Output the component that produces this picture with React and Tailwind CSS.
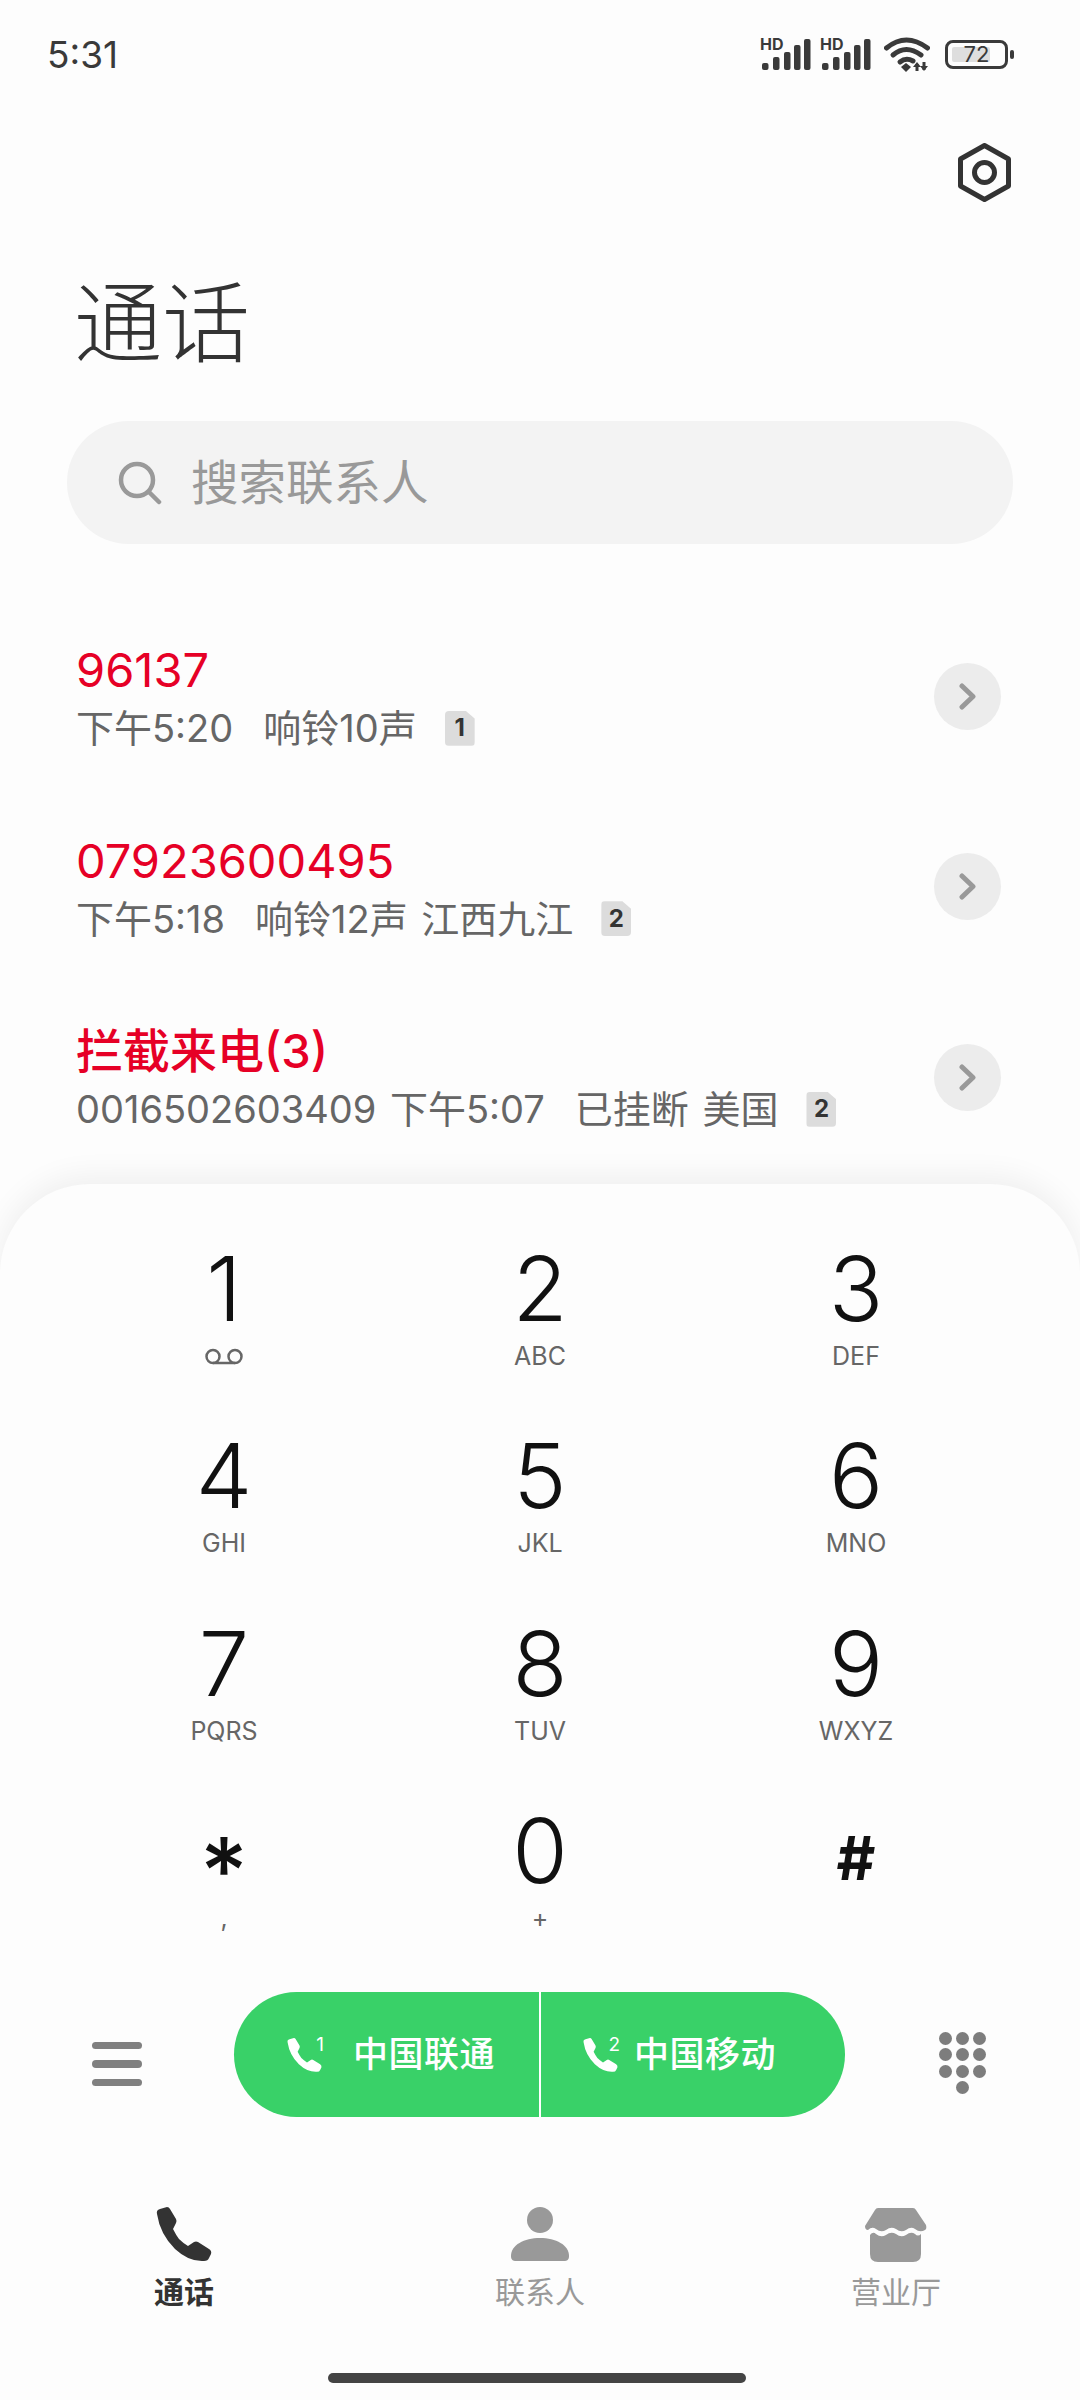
import React from 'react';

const calls = [
  { title: '96137', titleCls: 'font-normal', sub: '下午5:20', extra: '响铃10声', badge: '1' },
  { title: '07923600495', titleCls: 'font-normal', sub: '下午5:18', extra: '响铃12声 江西九江', badge: '2' },
  { title: '拦截来电(3)', titleCls: 'font-medium', sub: '0016502603409 下午5:07', extra: '已挂断 美国', badge: '2' },
];

const keys = [
  { digit: '1', sub: null, cls: 'text-[90px] leading-[92px] font-light' },
  { digit: '2', sub: 'ABC', cls: 'text-[90px] leading-[92px] font-light' },
  { digit: '3', sub: 'DEF', cls: 'text-[90px] leading-[92px] font-light' },
  { digit: '4', sub: 'GHI', cls: 'text-[90px] leading-[92px] font-light' },
  { digit: '5', sub: 'JKL', cls: 'text-[90px] leading-[92px] font-light' },
  { digit: '6', sub: 'MNO', cls: 'text-[90px] leading-[92px] font-light' },
  { digit: '7', sub: 'PQRS', cls: 'text-[90px] leading-[92px] font-light' },
  { digit: '8', sub: 'TUV', cls: 'text-[90px] leading-[92px] font-light' },
  { digit: '9', sub: 'WXYZ', cls: 'text-[90px] leading-[92px] font-light' },
  { digit: '*', sub: ',', cls: 'text-[92px] leading-[52px] pt-[40px] font-medium' },
  { digit: '0', sub: '+', cls: 'text-[90px] leading-[92px] font-light' },
  { digit: '#', sub: '', cls: 'text-[60px] leading-[78px] pt-[14px] font-bold' },
];

const PHONE = 'M1 7Q0 3 4 2L11 0Q13 0 14 2L20 12Q21 14 20 16L17 22Q20 28 23 32Q27 36 32 39L38 35Q40 34 42 35L53 42Q56 44 55 47L53 51Q52 54 48 54Q33 55 19 42Q4 27 1 7Z';

function Signal() {
  return (
    <div className="relative w-[51px] h-[33px]">
      <span className="absolute left-0 top-[-3px] text-[16px] leading-[18px] font-bold text-[#3a3a3a]">HD</span>
      <svg width="51" height="33" viewBox="0 0 51 33" fill="#3a3a3a">
        <rect x="2" y="25" width="6.5" height="7" rx="2" />
        <rect x="13" y="19" width="6.5" height="13" rx="2" />
        <rect x="24" y="14" width="6.5" height="18" rx="2" />
        <rect x="34" y="7" width="6.5" height="25" rx="2" />
        <rect x="44" y="1" width="6.5" height="31" rx="2" />
      </svg>
    </div>
  );
}

function Wifi() {
  return (
    <svg width="46" height="35" viewBox="0 0 46 35" fill="none" stroke="#3a3a3a" strokeWidth="5" strokeLinecap="round">
      <path d="M2.5 11Q22 -5 43.5 11" />
      <path d="M9 18Q22 7 37 18" />
      <path d="M16 25Q22 20 29 24" />
      <path d="M17 30L22 26L27 30L22 35Z" fill="#3a3a3a" stroke="none" />
      <path d="M33 27V34M40 25V33" strokeWidth="3" strokeLinecap="butt" />
      <path d="M29 30L33 25L37 30ZM36 29L40 34L44 29Z" fill="#3a3a3a" stroke="none" />
    </svg>
  );
}

function Battery() {
  return (
    <div className="flex items-center gap-[2px]">
      <div className="relative w-[63px] h-[29px] rounded-[8px] border-[3px] border-[#3a3a3a] p-[4px]">
        <div className="w-[38px] h-full rounded-[2px] bg-[#dedede]" />
        <span className="absolute inset-0 flex items-center justify-center text-[22px] leading-none text-[#3a3a3a]">72</span>
      </div>
      <div className="w-[4px] h-[9px] rounded-[2px] bg-[#3a3a3a]" />
    </div>
  );
}

function Voicemail() {
  return (
    <svg width="40" height="17" viewBox="0 0 40 17" fill="none" stroke="#666" strokeWidth="2.5">
      <circle cx="9" cy="8.5" r="6.5" />
      <circle cx="31" cy="8.5" r="6.5" />
      <path d="M9 15H31" />
    </svg>
  );
}

function CallRow({ call }) {
  return (
    <div className="flex items-center justify-between h-[190.5px] pl-[76px] pr-[79px]">
      <div className="pt-[6px]">
        <div className={`text-[47px] leading-[58px] text-[#e60026] ${call.titleCls}`}>{call.title}</div>
        <div className="flex items-center text-[38px] leading-[58px] text-[#666666] [word-spacing:3px]">
          <span>{call.sub}</span>
          <span className="ml-[30px]">{call.extra}</span>
          <span
            className="ml-[28px] flex items-center justify-center w-[30px] h-[35px] rounded-[4px] bg-[#dcdcdc] text-[24px] leading-none font-bold text-[#333333] [clip-path:polygon(0_0,70%_0,100%_22%,100%_100%,0_100%)]"
          >
            {call.badge}
          </span>
        </div>
      </div>
      <div className="flex items-center justify-center w-[67px] h-[67px] rounded-full bg-[#ececec]">
        <svg width="17" height="27" viewBox="0 0 17 27" fill="none" stroke="#999999" strokeWidth="5" strokeLinecap="round" strokeLinejoin="round">
          <path d="M3 3L14 13.5L3 24" />
        </svg>
      </div>
    </div>
  );
}

function SimButton({ sim, label, className }) {
  return (
    <div className={`flex items-center h-full text-white ${className}`}>
      <div className="relative w-[35px] h-[35px]">
        <svg width="35" height="35" viewBox="0 0 56 56" fill="#ffffff" className="absolute left-0 top-[1px]">
          <path d={PHONE} />
        </svg>
        <span className="absolute right-[-2px] top-[-3px] text-[19px] leading-[22px]">{sim}</span>
      </div>
      <span className="text-[35px] leading-none tracking-[0.5px] font-medium">{label}</span>
    </div>
  );
}

export default function App() {
  return (
    <div className="relative flex flex-col w-[1080px] h-[2400px] overflow-hidden bg-[#fdfdfd] font-['Inter','Noto_Sans_CJK_SC',sans-serif]">
      <div className="flex items-center justify-between h-[108px] pl-[47px] pr-[66px]">
        <span className="text-[37px] leading-none text-[#3a3a3a]">5:31</span>
        <div className="flex items-center">
          <Signal />
          <div className="ml-[9px]"><Signal /></div>
          <div className="ml-[13px]"><Wifi /></div>
          <div className="ml-[15px]"><Battery /></div>
        </div>
      </div>

      <div className="flex justify-end pr-[69px] mt-[35px]">
        <svg width="53" height="59" viewBox="0 0 53 59" fill="none" stroke="#333333" strokeWidth="5" strokeLinejoin="round">
          <path d="M26.5 2.5L50.5 16V43L26.5 56.5L2.5 43V16Z" />
          <circle cx="26.5" cy="29.5" r="10" />
        </svg>
      </div>

      <h1 className="mt-[77px] pl-[74px] text-[88px] leading-[88px] font-light text-[#333333]">通话</h1>

      <div className="flex items-center mt-[54px] mx-[67px] h-[123px] rounded-full bg-[#f3f3f3] pl-[51px]">
        <svg width="44" height="44" viewBox="0 0 44 44" fill="none" stroke="#999999" strokeWidth="4.5" strokeLinecap="round">
          <circle cx="19" cy="19" r="16" />
          <path d="M31 31L41 41" />
        </svg>
        <span className="ml-[29px] text-[47.5px] leading-none text-[#999999]">搜索联系人</span>
      </div>

      <div className="mt-[57px]">
        {calls.map((call, i) => (
          <CallRow key={i} call={call} />
        ))}
      </div>

      <div className="flex-1 flex flex-col mt-[11px] pt-[59px] rounded-t-[90px] bg-[#fdfdfd] shadow-[0_-8px_30px_rgba(0,0,0,0.06)]">
        <div className="grid grid-cols-3 auto-rows-[187.5px] px-[66px]">
          {keys.map(({ digit, sub, cls }) => (
            <div key={digit} className="flex flex-col items-center">
              <span className={`h-[92px] text-[#111111] ${cls}`}>{digit}</span>
              <div className="flex items-center justify-center h-[40px] pt-[3px] text-[25px] leading-none text-[#666666]">
                {sub === null ? <Voicemail /> : sub}
              </div>
            </div>
          ))}
        </div>

        <div className="relative flex items-start -mt-[1px] h-[125px] pl-[92px]">
          <div className="flex flex-col gap-[11px] mt-[50px] w-[50px]">
            <div className="h-[7.5px] rounded-full bg-[#808080]" />
            <div className="h-[7.5px] rounded-full bg-[#808080]" />
            <div className="h-[7.5px] rounded-full bg-[#808080]" />
          </div>
          <div className="flex ml-[92px] w-[611px] h-[125px] rounded-full bg-[#39d168] overflow-hidden">
            <SimButton sim="1" label="中国联通" className="w-[307px] pl-[53px] gap-[31px] border-r-2 border-white" />
            <SimButton sim="2" label="中国移动" className="flex-1 pl-[42px] gap-[16px]" />
          </div>
          <div className="grid grid-cols-3 gap-x-[4px] gap-y-[3.5px] mt-[40px] ml-[94px] w-[47px]">
            {[0, 1, 2, 3, 4, 5, 6, 7, 8].map((n) => (
              <div key={n} className="w-[13px] h-[13px] rounded-full bg-[#7d7d7d]" />
            ))}
            <div className="col-start-2 w-[13px] h-[13px] rounded-full bg-[#7d7d7d]" />
          </div>
        </div>

        <div className="grid grid-cols-3 px-[6px] pt-[88px]">
          <div className="flex flex-col items-center">
            <div className="flex items-center justify-center h-[60px]">
              <svg width="56" height="56" viewBox="0 0 56 56" fill="#333333"><path d={PHONE} /></svg>
            </div>
            <span className="mt-[9px] text-[30px] leading-[36px] font-bold text-[#333333]">通话</span>
          </div>
          <div className="flex flex-col items-center">
            <div className="flex items-center justify-center h-[60px]">
              <svg width="58" height="58" viewBox="0 0 58 58" fill="#999999">
                <circle cx="29" cy="14" r="13" />
                <path d="M0 50C0 39 13 32 29 32S58 39 58 50C58 54 56 55 53 55H5C2 55 0 54 0 50Z" />
              </svg>
            </div>
            <span className="mt-[9px] text-[30px] leading-[36px] text-[#999999]">联系人</span>
          </div>
          <div className="flex flex-col items-center">
            <div className="flex items-center justify-center h-[60px]">
              <svg width="62" height="54" viewBox="0 0 62 54" fill="#999999">
                <path d="M13 0H48Q50 0 51 2L61 17Q62 21 60 22Q55 25 50 21Q46 18 41 22Q36 25 31 21Q26 18 21 22Q16 25 11 21Q7 18 3 22Q0 22 0 18L10 2Q11 0 13 0Z" />
                <path d="M5 27Q8 23 11 26Q16 30 21 27Q26 23 31 26Q36 30 41 27Q46 23 50 26Q53 29 56 26V46Q56 54 48 54H13Q5 54 5 46Z" />
              </svg>
            </div>
            <span className="mt-[9px] text-[30px] leading-[36px] text-[#999999]">营业厅</span>
          </div>
        </div>

        <div className="mt-[63px] ml-[328px] w-[418px] h-[10px] rounded-full bg-[#444444]" />
      </div>
    </div>
  );
}
